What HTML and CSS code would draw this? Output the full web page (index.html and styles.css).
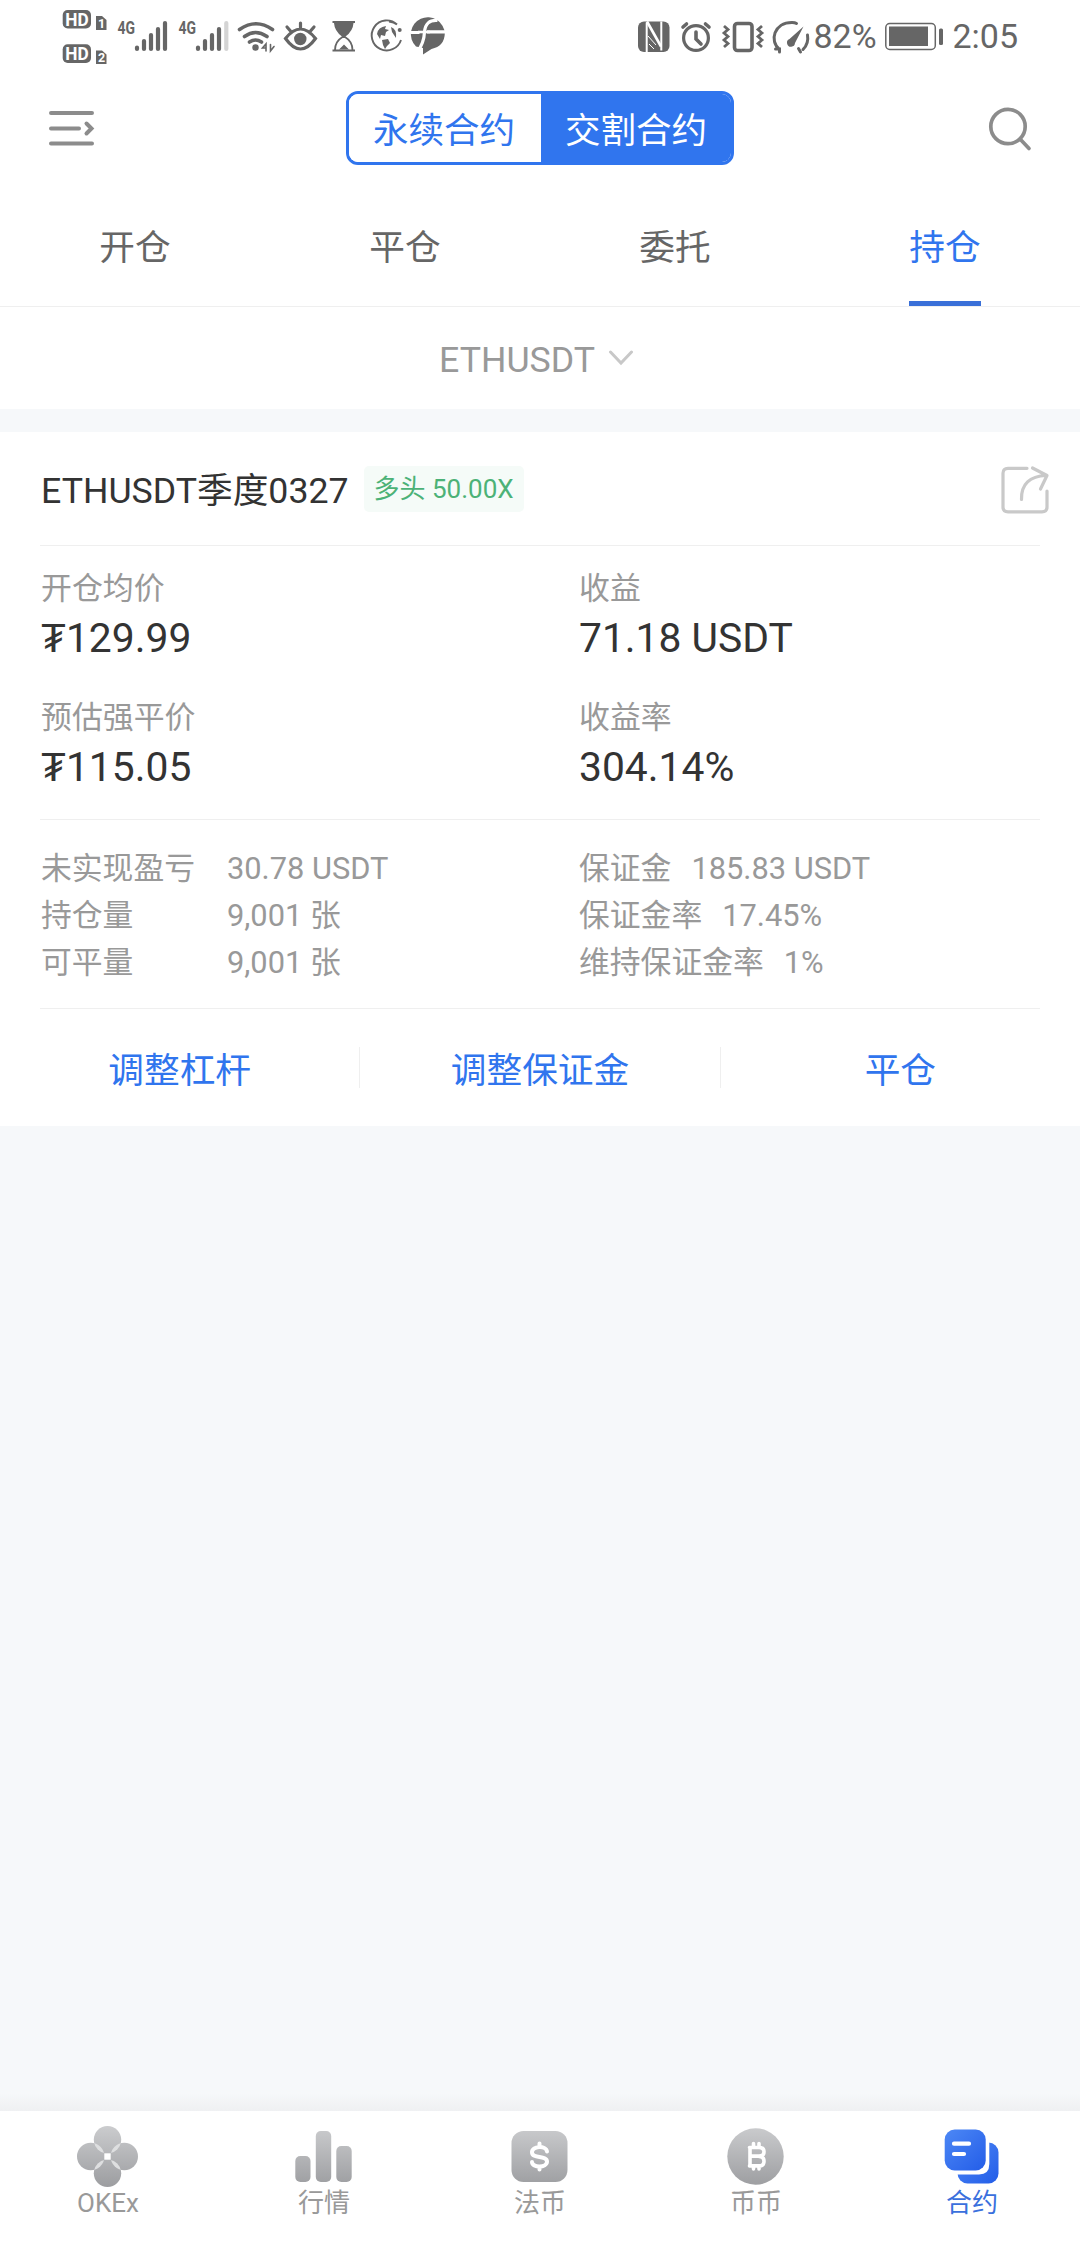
FILE: index.html
```html
<!DOCTYPE html>
<html lang="zh-CN">
<head>
<meta charset="utf-8">
<title>交割合约 持仓</title>
<link rel="stylesheet" href="styles.css">
</head>
<body>
<div class="app">
  <header class="status">
    <svg class="status-left" width="384" height="56" viewBox="62 8 384 56">
      <g fill="#666">
        <rect x="62.700" y="10" width="28.300" height="18.500" rx="5"/>
        <rect x="62.700" y="44.300" width="28.300" height="18.700" rx="5"/>
        <path d="M96 16h6l4.500 4v10H96zM96 50.500h6l4.500 4v9.500H96z"/>
      </g>
      <g class="hd-text" fill="#fff">
        <text x="65.300" y="25.600" textLength="23.400" lengthAdjust="spacingAndGlyphs">HD</text>
        <text x="65.300" y="60" textLength="23.400" lengthAdjust="spacingAndGlyphs">HD</text>
        <text class="sim" x="98" y="28">1</text>
        <text class="sim" x="98" y="62">2</text>
      </g>
      <g class="net-text" fill="#666">
        <text x="117.500" y="34" textLength="17.500" lengthAdjust="spacingAndGlyphs">4G</text>
        <text x="178.500" y="34" textLength="17.500" lengthAdjust="spacingAndGlyphs">4G</text>
      </g>
      <g stroke="#666" stroke-width="4.200" stroke-linecap="round">
        <path d="M137 47.500v1.500M144 41v8M151 35v14M158 29v20M165 23v26"/>
        <path d="M198 47.500v1.500M205 41v8M212 35v14M219 29v20"/>
        <path d="M226.300 23v26" stroke="#d4d4d4"/>
      </g>
      <g stroke="#666" fill="none" stroke-width="3.600" stroke-linecap="round">
        <path d="M239.500 29.500q16.500-11.500 33 0M244.500 36.500q11-8 22.500 0M249.500 42q6-4 12 0"/>
        <circle cx="255.500" cy="47.500" r="3.200" fill="#666" stroke="none"/>
        <path d="M266 51v-7l-3.500 4h3M270.500 44.500v6.500l3.500-4.500" stroke-width="1.600"/>
      </g>
      <g stroke="#666" fill="none" stroke-width="3.200" stroke-linecap="round">
        <path d="M285.500 38.500q15-19 30 0q-15 21-30 0zM300.500 28v-5M290.500 31l-3.500-4M310.500 31l3.500-4"/>
        <circle cx="300.300" cy="39" r="6.200" fill="#666" stroke="none"/>
      </g>
      <path d="M332.500 22h22.500M332.500 50.500h22.500" stroke="#666" stroke-width="2.200"/>
      <path d="M334 23h19.500q-.5 8-8 13.500h-3.500q-7.500-5.500-8-13.500zM339 49.500l5-5 5 5z" fill="#666"/>
      <path d="M335 50q0-8.500 7.500-13h2.500q7.500 4.500 7.500 13" fill="none" stroke="#666" stroke-width="1.800"/>
      <path d="M397 24.500A15 15 0 1 0 401 40M389 21.500q5 .5 8 3" fill="none" stroke="#666" stroke-width="1.900"/>
      <circle cx="399.700" cy="30" r="2" fill="#666"/>
      <path d="M377 34q1-7 9-8l-1 3 4 1-3 2-1 4-4-1-1 4zM391 27q6 2 5 11l-4-6zM382 40l6-1 2 4-3 3-2 3-2-4z" fill="#666"/>
      <path d="M416 46.500A17 17 0 1 1 444.800 33.500Q444.500 46 431.500 49L423 54.500V48z" fill="#666"/>
      <path d="M417.500 51.500Q424 43 424.500 32Q425.500 19.500 437.500 20.500M411 32.500h8.500M427 31.800h18" fill="none" stroke="#fff" stroke-width="3.200"/>
      <path d="M418 32h12" stroke="#fff" stroke-width="2.600"/>
    </svg>
    <div class="status-right">
      <svg width="174" height="40" viewBox="638 16 174 40">
        <rect x="639" y="20.500" width="31.500" height="30.500" rx="6" fill="#666"/>
        <path d="M647.700 51V21.500M662.300 49.500V20.500" fill="none" stroke="#fff" stroke-width="2"/>
        <path d="M648 20.500l14 25" fill="none" stroke="#fff" stroke-width="2.600"/>
        <path d="M649 35l8 9M650 43l5 5" fill="none" stroke="#fff" stroke-width="1"/>
        <g fill="none" stroke="#666">
          <circle cx="697" cy="37" r="12.400" stroke-width="3.200"/>
          <path d="M697 31v7l5 5" stroke-width="3.600" stroke-linecap="round"/>
          <path d="M684 26l3.500-3M710 26l-3.500-3" stroke-width="3.600" stroke-linecap="round"/>
          <rect x="735.500" y="22.500" width="17.500" height="27" rx="3" stroke-width="3.600"/>
          <path d="M725 25l4 3.500-4 3.500 4 3.500-4 3.500 4 3.500-4 3.500M763 25l-4 3.500 4 3.500-4 3.500 4 3.500-4 3.500 4 3.500" stroke-width="2.800"/>
          <path d="M780.500 48.500C770 40 775 21.500 793 21.500q3 0 4.500 1M804 48.500q6-6 4.500-14.500M776.500 48h4v3M799.500 47.500l2 3.500" stroke-width="3" stroke-linecap="round"/>
        </g>
        <path d="M804.500 25.500L796 42a4 4 0 1 1-5.500-4z" fill="#666"/>
      </svg>
      <span class="battery-pct">82%</span>
      <svg class="battery" width="60" height="30" viewBox="885 22 60 30">
        <rect x="886.800" y="23.500" width="49.500" height="26" rx="4" fill="none" stroke="#666" stroke-width="1.500"/>
        <path d="M890 26.500h39v19.500h-39z" fill="#666"/>
        <rect x="940" y="28.500" width="4" height="16.500" rx="1.500" fill="#666"/>
      </svg>
      <span class="clock">2:05</span>
    </div>
  </header>

  <div class="topbar">
    <svg class="menu-icon" width="46" height="38" viewBox="0 0 46 38" fill="none" stroke="#8c8c8c" stroke-width="4" stroke-linecap="round">
      <path d="M2 3h41M2 18.500h28M2 33.500h41"/><path d="M37.500 13.500l5 5-5 5"/>
    </svg>
    <div class="segment"><button class="seg">永续合约</button><button class="seg seg-on">交割合约</button></div>
    <svg class="search-icon" width="46" height="46" viewBox="0 0 46 46" fill="none" stroke="#8c8c8c" stroke-width="3.700" stroke-linecap="round">
      <circle cx="20" cy="20.500" r="17.200"/><path d="M32.500 33.500l8.500 9"/>
    </svg>
  </div>

  <nav class="tabs">
    <a class="tab">开仓</a><a class="tab">平仓</a><a class="tab">委托</a><a class="tab tab-on">持仓</a>
  </nav>

  <div class="pair">
    <span>ETHUSDT</span>
    <svg width="26" height="16" viewBox="0 0 26 16" fill="none" stroke="#c8c8c8" stroke-width="3" stroke-linecap="round"><path d="M2.500 2L13 13 23.500 2"/></svg>
  </div>

  <section class="card">
    <div class="card-head">
      <h1 class="name">ETHUSDT季度0327</h1>
      <span class="badge">多头 50.00X</span>
      <svg class="share" width="50" height="50" viewBox="0 0 50 50" fill="none" stroke="#c9c9c9" stroke-width="3.200" stroke-linecap="round" stroke-linejoin="round">
        <path d="M27 3.300H8q-5 0-5 5v34q0 4.500 5 4.500h34q5 0 5-4.500V26"/>
        <path d="M21.500 34.500C21 19 30 11 46 10.500M32.500 3L47 10.500 40.500 24"/>
      </svg>
    </div>
    <div class="stats">
      <div class="stat"><span class="label">开仓均价</span><span class="value">₮129.99</span></div>
      <div class="stat"><span class="label">收益</span><span class="value">71.18 USDT</span></div>
      <div class="stat"><span class="label">预估强平价</span><span class="value">₮115.05</span></div>
      <div class="stat"><span class="label">收益率</span><span class="value">304.14%</span></div>
    </div>
    <div class="details">
      <dl class="col col-fixed">
        <div><dt>未实现盈亏</dt><dd>30.78 USDT</dd></div>
        <div><dt>持仓量</dt><dd>9,001 张</dd></div>
        <div><dt>可平量</dt><dd>9,001 张</dd></div>
      </dl>
      <dl class="col">
        <div><dt>保证金</dt><dd>185.83 USDT</dd></div>
        <div><dt>保证金率</dt><dd>17.45%</dd></div>
        <div><dt>维持保证金率</dt><dd>1%</dd></div>
      </dl>
    </div>
    <div class="actions"><a>调整杠杆</a><a>调整保证金</a><a>平仓</a></div>
  </section>

  <main class="blank"></main>

  <footer class="nav">
    <a class="item">
      <svg width="64" height="64" viewBox="76 2124 64 64">
        <defs>
          <linearGradient id="grey" gradientUnits="userSpaceOnUse" x1="0" y1="2126" x2="0" y2="2187"><stop offset="0" stop-color="#cbccce"/><stop offset="1" stop-color="#9c9da0"/></linearGradient>
          <clipPath id="petal-l"><circle cx="90.700" cy="2156.500" r="13.700"/></clipPath>
          <clipPath id="petal-r"><circle cx="124.300" cy="2156.500" r="13.700"/></clipPath>
        </defs>
        <g fill="url(#grey)"><circle cx="107.500" cy="2139.700" r="13.700"/><circle cx="90.700" cy="2156.500" r="13.700"/><circle cx="124.300" cy="2156.500" r="13.700"/><circle cx="107.500" cy="2173.300" r="13.700"/><path d="M100 2149h15v15h-15z"/></g>
        <g fill="#dedfe0"><g clip-path="url(#petal-l)"><circle cx="107.500" cy="2139.700" r="13.700"/><circle cx="107.500" cy="2173.300" r="13.700"/></g><g clip-path="url(#petal-r)"><circle cx="107.500" cy="2139.700" r="13.700"/><circle cx="107.500" cy="2173.300" r="13.700"/></g></g>
        <path d="M104.300 2153.300h6.400v6.400h-6.400z" fill="#fff"/>
      </svg><span>OKEx</span></a>
    <a class="item">
      <svg width="64" height="64" viewBox="292 2124 64 64" fill="url(#grey)"><rect x="295.300" y="2156" width="15.200" height="26" rx="5"/><rect x="315.800" y="2131" width="15.400" height="51" rx="5"/><rect x="336.300" y="2146" width="15.400" height="36" rx="5"/></svg><span>行情</span></a>
    <a class="item">
      <svg width="64" height="64" viewBox="508 2124 64 64"><rect x="511.500" y="2131" width="56" height="51" rx="12" fill="url(#grey)"/><path d="M547 2151.500c-1-6.500-15.500-5.500-15 1 0 6.500 15 2.500 15 9 0 6.500-15 6.500-15 .5M539.500 2143.500v3M539.500 2166.500v3" fill="none" stroke="#fff" stroke-width="4" stroke-linecap="round"/></svg><span>法币</span></a>
    <a class="item">
      <svg width="64" height="64" viewBox="724 2124 64 64"><circle cx="755.500" cy="2156.500" r="28.200" fill="url(#grey)"/><path d="M749.500 2147.500h9.500q5 0 5 4.300t-5 4.300h-8.500M759 2156.500q5 0 5 4.700t-5 4.700h-9.500M750 2147.500v18.500M753.500 2143.500v3M759 2143.500v3M753.500 2166.500v2.500M759 2166.500v2.500" fill="none" stroke="#fff" stroke-width="3.600" stroke-linecap="round"/></svg><span>币币</span></a>
    <a class="item item-on">
      <svg width="64" height="64" viewBox="940 2124 64 64">
        <defs><linearGradient id="blue" x1="0" y1="0" x2="1" y2="1"><stop offset="0" stop-color="#4d88f5"/><stop offset="1" stop-color="#235de8"/></linearGradient></defs>
        <rect x="957.500" y="2142.500" width="41" height="41" rx="10" fill="url(#blue)"/>
        <path d="M942 2126.500h37q10.300 0 10.300 10.500v27q0 10.500-10.300 10.500h-37z" fill="#fff"/>
        <rect x="944.700" y="2129.500" width="41" height="41" rx="10" fill="url(#blue)"/>
        <path d="M954 2143.700h15M954 2154h10" stroke="#fff" stroke-width="4.200" stroke-linecap="round"/>
      </svg><span>合约</span></a>
  </footer>
</div>
</body>
</html>
```
FILE: styles.css
```css
* { box-sizing: border-box; }

body, h1, dl, dd { margin: 0; }

body {
  background: #fff;
  font-family: Roboto, "Noto Sans CJK SC", sans-serif;
  color: #333;
}

svg { display: block; flex: none; }

.app {
  display: flex;
  flex-direction: column;
  width: 1080px;
  height: 2244px;
}

.status {
  display: flex;
  justify-content: space-between;
  height: 75px;
  padding: 8px 62px 0;
  color: #666;
  font-size: 34px;
}
.hd-text { font: 700 18px Roboto, sans-serif; }
.hd-text .sim { font-size: 12.500px; }
.net-text { font: 700 18px Roboto, sans-serif; }
.status-right {
  display: flex;
  align-items: center;
  height: 57px;
  line-height: 57px;
}
.battery-pct { width: 71px; padding-left: 2px; }
.battery { margin: 0 8px 0 2px; }

.topbar {
  display: flex;
  align-items: center;
  justify-content: space-between;
  height: 107px;
  padding: 0 46px 0 49px;
}
.segment {
  display: flex;
  width: 388px;
  height: 74px;
  margin: -1px 3px 1px 0;
  border: 3px solid #3075ee;
  border-radius: 12px;
  overflow: hidden;
}
.seg {
  flex: 1;
  border: 0;
  padding: 0 2px 1px 0;
  background: #fff;
  color: #3075ee;
  font: inherit;
  font-size: 35.500px;
}
.seg-on { padding-right: 0; background: #3075ee; color: #fff; }

.tabs {
  display: flex;
  height: 125px;
  border-bottom: 1px solid #efefef;
}
.tab {
  flex: 1;
  display: flex;
  justify-content: center;
  color: #666;
  font-size: 35.700px;
  line-height: 132px;
}
.tab-on { color: #3075ee; }
.tab-on::after {
  content: "";
  width: 72px;
  height: 5px;
  margin: 119px 0 0 -72px;
  background: #3a70d8;
}

.pair {
  display: flex;
  align-items: center;
  justify-content: center;
  gap: 13px;
  height: 102px;
  padding: 4px 7px 0 0;
  color: #999;
  font-size: 35.700px;
}
.pair svg { margin-top: -4px; }

.card {
  height: 717px;
  border-top: 23px solid #f6f8fa;
  padding: 0 40px;
}
.card-head {
  display: flex;
  align-items: center;
  height: 114px;
  border-bottom: 1px solid #efefef;
}
.name {
  margin: -2px 0 0 1px;
  font-size: 35.700px;
  font-weight: 400;
}
.badge {
  margin-left: 15px;
  padding: 1px 10px 0;
  border-radius: 5px;
  background: #f5fbf8;
  color: #4cb277;
  font-size: 26px;
  line-height: 45px;
}
.share { margin: 2px -10px 0 auto; }

.stats {
  display: grid;
  grid-template-columns: 538px 1fr;
  grid-auto-rows: 129px;
  height: 274px;
  padding: 20px 0 0 1px;
  border-bottom: 1px solid #efefef;
}
.stat { display: flex; flex-direction: column; }
.label {
  color: #999;
  font-size: 30.900px;
  line-height: 46px;
}
.value {
  font-size: 40.800px;
  line-height: 52px;
}

.details {
  display: grid;
  grid-template-columns: 538px 1fr;
  height: 189px;
  padding: 25px 0 0 1px;
  border-bottom: 1px solid #efefef;
  color: #999;
  font-size: 30.800px;
  line-height: 47px;
}
.col > div { display: flex; gap: 20px; }
.col-fixed dt { width: 166px; }

.actions {
  display: flex;
  align-items: center;
  height: 117px;
  margin: 0 -40px;
}
.actions a {
  flex: 1;
  height: 41px;
  color: #3075ee;
  font-size: 35.700px;
  line-height: 48px;
  text-align: center;
}
.actions a + a { border-left: 1px solid #efefef; }

.blank {
  flex: 1;
  background: linear-gradient(to bottom, #f6f8fa calc(100% - 18px), #eff0f2);
}

.nav {
  display: flex;
  height: 133px;
  padding-top: 13px;
}
.item {
  flex: 1;
  display: flex;
  flex-direction: column;
  align-items: center;
  color: #999;
  font-size: 26px;
  line-height: 30px;
}
.item-on { color: #3a70dd; }
```
